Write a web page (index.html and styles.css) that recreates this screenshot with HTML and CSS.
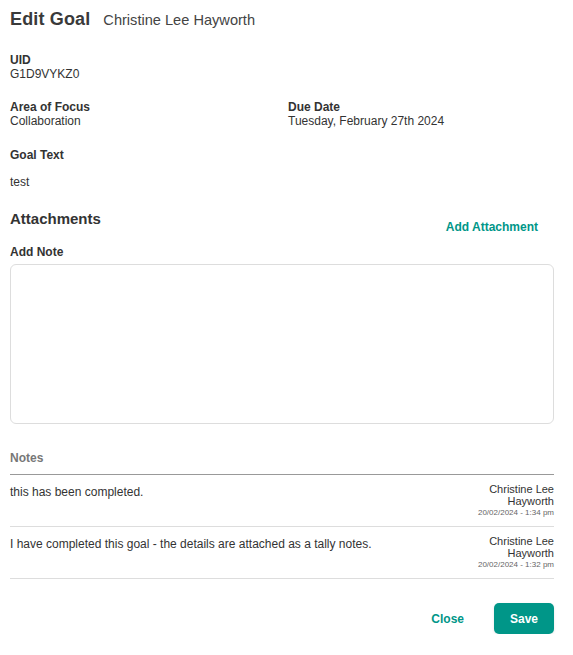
FILE: index.html
```html
<!DOCTYPE html>
<html>
<head>
<meta charset="utf-8">
<link rel="stylesheet" href="styles.css">
</head>
<body>
<div class="modal">
  <div class="header">
    <h1 class="title">Edit Goal</h1>
    <span class="subtitle">Christine Lee Hayworth</span>
  </div>

  <div class="field uid">
    <div class="label">UID</div>
    <div class="value">G1D9VYKZ0</div>
  </div>

  <div class="row">
    <div class="field col">
      <div class="label">Area of Focus</div>
      <div class="value">Collaboration</div>
    </div>
    <div class="field col">
      <div class="label">Due Date</div>
      <div class="value">Tuesday, February 27th 2024</div>
    </div>
  </div>

  <div class="field goal">
    <div class="label">Goal Text</div>
    <div class="value goal-value">test</div>
  </div>

  <div class="attach-row">
    <h2 class="section">Attachments</h2>
    <a class="link">Add Attachment</a>
  </div>

  <div class="label note-label">Add Note</div>
  <textarea class="note-input"></textarea>

  <div class="notes-head">Notes</div>
  <div class="note">
    <div class="note-text">this has been completed.</div>
    <div class="note-meta">
      <div class="author">Christine Lee Hayworth</div>
      <div class="date">20/02/2024 - 1:34 pm</div>
    </div>
  </div>
  <div class="note">
    <div class="note-text">I have completed this goal - the details are attached as a tally notes.</div>
    <div class="note-meta">
      <div class="author">Christine Lee Hayworth</div>
      <div class="date">20/02/2024 - 1:32 pm</div>
    </div>
  </div>

  <div class="actions">
    <button class="btn-close">Close</button>
    <button class="btn-save">Save</button>
  </div>
</div>
</body>
</html>
```
FILE: styles.css
```css
* { box-sizing: border-box; }
body {
  margin: 0;
  font-family: "Liberation Sans", Arial, sans-serif;
  color: #333;
  background: #fff;
}
.modal {
  padding: 9px 20px 0 10px;
  width: 573px;
}
.header {
  display: flex;
  align-items: baseline;
  gap: 13px;
  height: 26px;
}
.title {
  margin: 0;
  font-size: 18px;
  font-weight: bold;
  color: #3a3a3a;
  letter-spacing: 0.15px;
}
.subtitle {
  font-size: 14.6px;
  color: #444;
}
.label {
  font-size: 12px;
  font-weight: bold;
  color: #333;
  line-height: 14px;
}
.value {
  font-size: 12px;
  color: #333;
  line-height: 14px;
}
.uid { margin-top: 18px; }
.row {
  display: flex;
  margin-top: 19px;
}
.col { flex: 0 0 278px; }
.goal { margin-top: 20px; }
.goal-value { margin-top: 13px; }
.attach-row {
  display: flex;
  justify-content: space-between;
  align-items: flex-start;
  margin-top: 21px;
  padding-right: 15px;
}
.section {
  margin: 0;
  font-size: 15px;
  font-weight: bold;
  line-height: 18px;
  color: #333;
}
.link {
  font-size: 12px;
  font-weight: bold;
  color: #009688;
  margin-top: 10px;
  line-height: 14px;
}
.note-label { margin-top: 11px; }
.note-input {
  display: block;
  width: 544px;
  height: 160px;
  margin-top: 5px;
  border: 1px solid #ddd;
  border-radius: 6px;
  resize: none;
  font-family: inherit;
}
.notes-head {
  margin-top: 27px;
  font-size: 12px;
  font-weight: bold;
  color: #777;
  line-height: 14px;
  padding-bottom: 9px;
  width: 544px;
  border-bottom: 1px solid #999;
}
.note {
  display: flex;
  justify-content: space-between;
  width: 544px;
  padding: 8px 0 8px;
  border-bottom: 1px solid #ddd;
}
.note-text {
  font-size: 12px;
  line-height: 14px;
  color: #333;
  margin-top: 2px;
}
.note-meta {
  width: 80px;
  text-align: right;
}
.author {
  font-size: 11px;
  line-height: 12px;
  color: #333;
}
.date {
  font-size: 8px;
  color: #666;
  line-height: 10px;
  margin-top: 1px;
}
.actions {
  display: flex;
  justify-content: flex-end;
  align-items: center;
  gap: 30px;
  width: 544px;
  margin-top: 24px;
}
.btn-close {
  background: none;
  border: none;
  font-family: inherit;
  font-size: 12px;
  font-weight: bold;
  color: #009688;
  padding: 0;
}
.btn-save {
  background: #009688;
  border: none;
  color: #fff;
  font-family: inherit;
  font-size: 12px;
  font-weight: bold;
  width: 60px;
  height: 31px;
  border-radius: 5px;
  box-shadow: 0 1px 3px rgba(0,0,0,0.1);
}
```
